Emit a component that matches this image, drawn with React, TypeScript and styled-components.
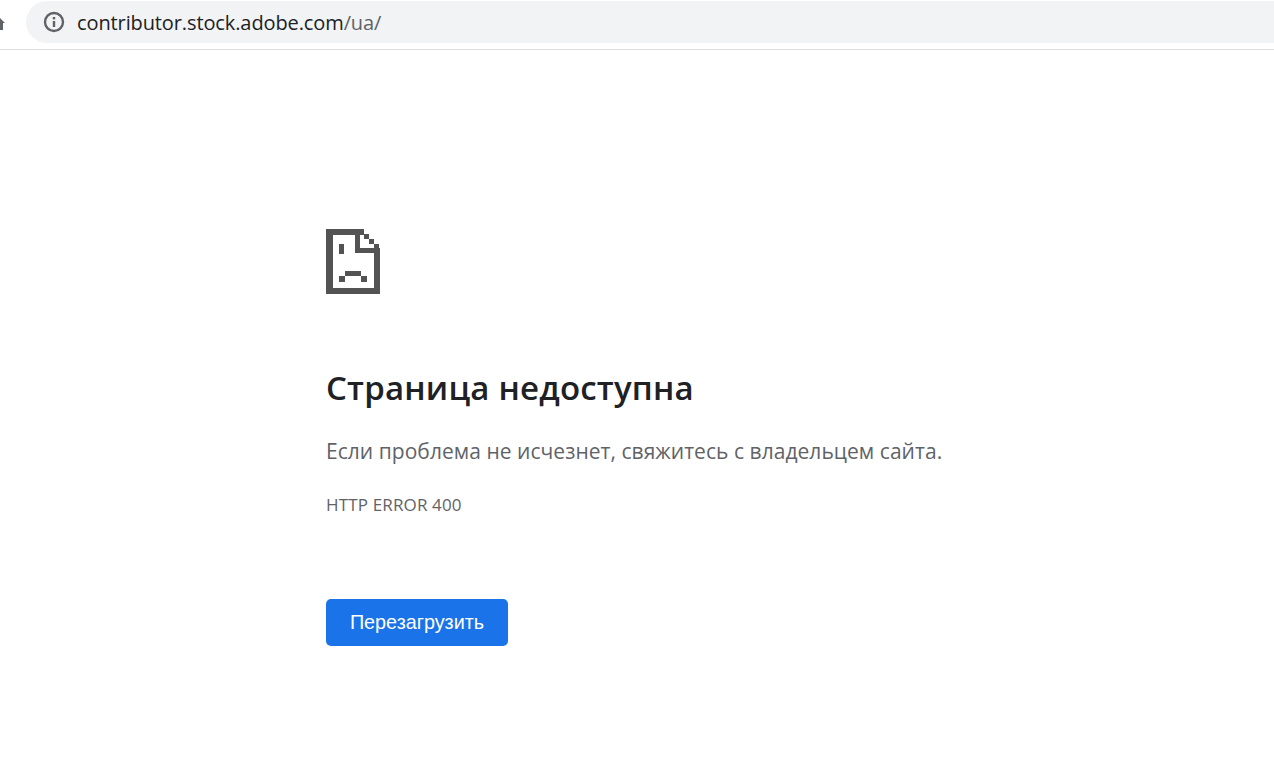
import React from "react";
import styled, { createGlobalStyle } from "styled-components";

const GlobalStyle = createGlobalStyle`
  html, body {
    margin: 0;
    padding: 0;
    background: #ffffff;
    overflow: hidden;
  }
`;

const Page = styled.div`
  width: 1274px;
  height: 763px;
  display: flex;
  flex-direction: column;
  font-family: "Open Sans", "Noto Sans", sans-serif;
`;

const Toolbar = styled.header`
  height: 50px;
  flex: none;
  display: flex;
  align-items: flex-start;
  padding: 1px 0 0 26px;
  border-bottom: 1px solid #dadce0;
  position: relative;
  box-sizing: border-box;
`;

const BackArrow = styled.svg`
  position: absolute;
  left: 0;
  top: 18px;
`;

const AddressBar = styled.div`
  flex: 1;
  height: 42px;
  display: flex;
  align-items: center;
  gap: 12px;
  padding-left: 17px;
  background: #f1f3f4;
  border-radius: 21px 0 0 21px;
`;

const Url = styled.div`
  font-size: 20px;
  letter-spacing: -0.11px;
  color: #202124;
`;

const UrlPath = styled.span`
  color: #5f6368;
`;

const Main = styled.main`
  flex: 1;
  padding: 179px 0 0 326px;
`;

const SadPage = styled.svg`
  display: block;
`;

const Title = styled.h1`
  margin: 72px 0 0;
  font-size: 33px;
  line-height: 44px;
  font-weight: 600;
  letter-spacing: 0.2px;
  color: #202124;
`;

const Message = styled.p`
  margin: 27px 0 0;
  font-size: 21px;
  line-height: 28px;
  letter-spacing: 0.04px;
  color: #5f6368;
`;

const Code = styled.p`
  margin: 29px 0 0;
  font-size: 17px;
  line-height: 22px;
  color: #5f6368;
  letter-spacing: 0.15px;
`;

const ReloadButton = styled.button`
  display: block;
  margin-top: 83px;
  width: 182px;
  height: 47px;
  padding: 0;
  border: none;
  border-radius: 5px;
  background: #1a73e8;
  color: #ffffff;
  font-family: "Liberation Sans", Arial, sans-serif;
  font-size: 19.8px;
`;

const InfoIcon = () => (
  <svg width="22" height="22" viewBox="0 0 22 22" fill="none">
    <circle cx="11" cy="11" r="9" stroke="#5f6368" strokeWidth="2.4" />
    <rect x="9.8" y="10" width="2.4" height="6" fill="#5f6368" />
    <rect x="9.8" y="6" width="2.4" height="2.4" fill="#5f6368" />
  </svg>
);

// pixel-art "sad page" icon, coordinates in screenshot pixels
const SadPageIcon = () => (
  <SadPage width="54" height="65" viewBox="0 0 54 65" fill="#535353" shapeRendering="crispEdges">
    <rect x="0" y="0" width="38" height="6" />
    <rect x="0" y="0" width="7" height="65" />
    <rect x="0" y="59" width="54" height="6" />
    <rect x="48" y="19" width="6" height="46" />
    <rect x="29" y="5" width="5" height="19" />
    <rect x="29" y="19" width="25" height="5" />
    <rect x="38" y="5" width="5" height="5" />
    <rect x="43" y="10" width="5" height="5" />
    <rect x="48" y="15" width="5" height="4" />
    <rect x="13" y="15" width="5" height="10" />
    <rect x="19" y="42" width="16" height="5" />
    <rect x="13" y="47" width="6" height="6" />
    <rect x="35" y="47" width="6" height="6" />
  </SadPage>
);

export default function App() {
  return (
    <>
      <GlobalStyle />
      <Page>
        <Toolbar>
          <BackArrow width="5" height="12" viewBox="0 0 5 12">
            <path d="M0 0 L5 5 L3 5 L3 12 L0 12 Z" fill="#5f6368" />
          </BackArrow>
          <AddressBar>
            <InfoIcon />
            <Url>
              contributor.stock.adobe.com<UrlPath>/ua/</UrlPath>
            </Url>
          </AddressBar>
        </Toolbar>
        <Main>
          <SadPageIcon />
          <Title>Страница недоступна</Title>
          <Message>Если проблема не исчезнет, свяжитесь с владельцем сайта.</Message>
          <Code>HTTP ERROR 400</Code>
          <ReloadButton>Перезагрузить</ReloadButton>
        </Main>
      </Page>
    </>
  );
}
